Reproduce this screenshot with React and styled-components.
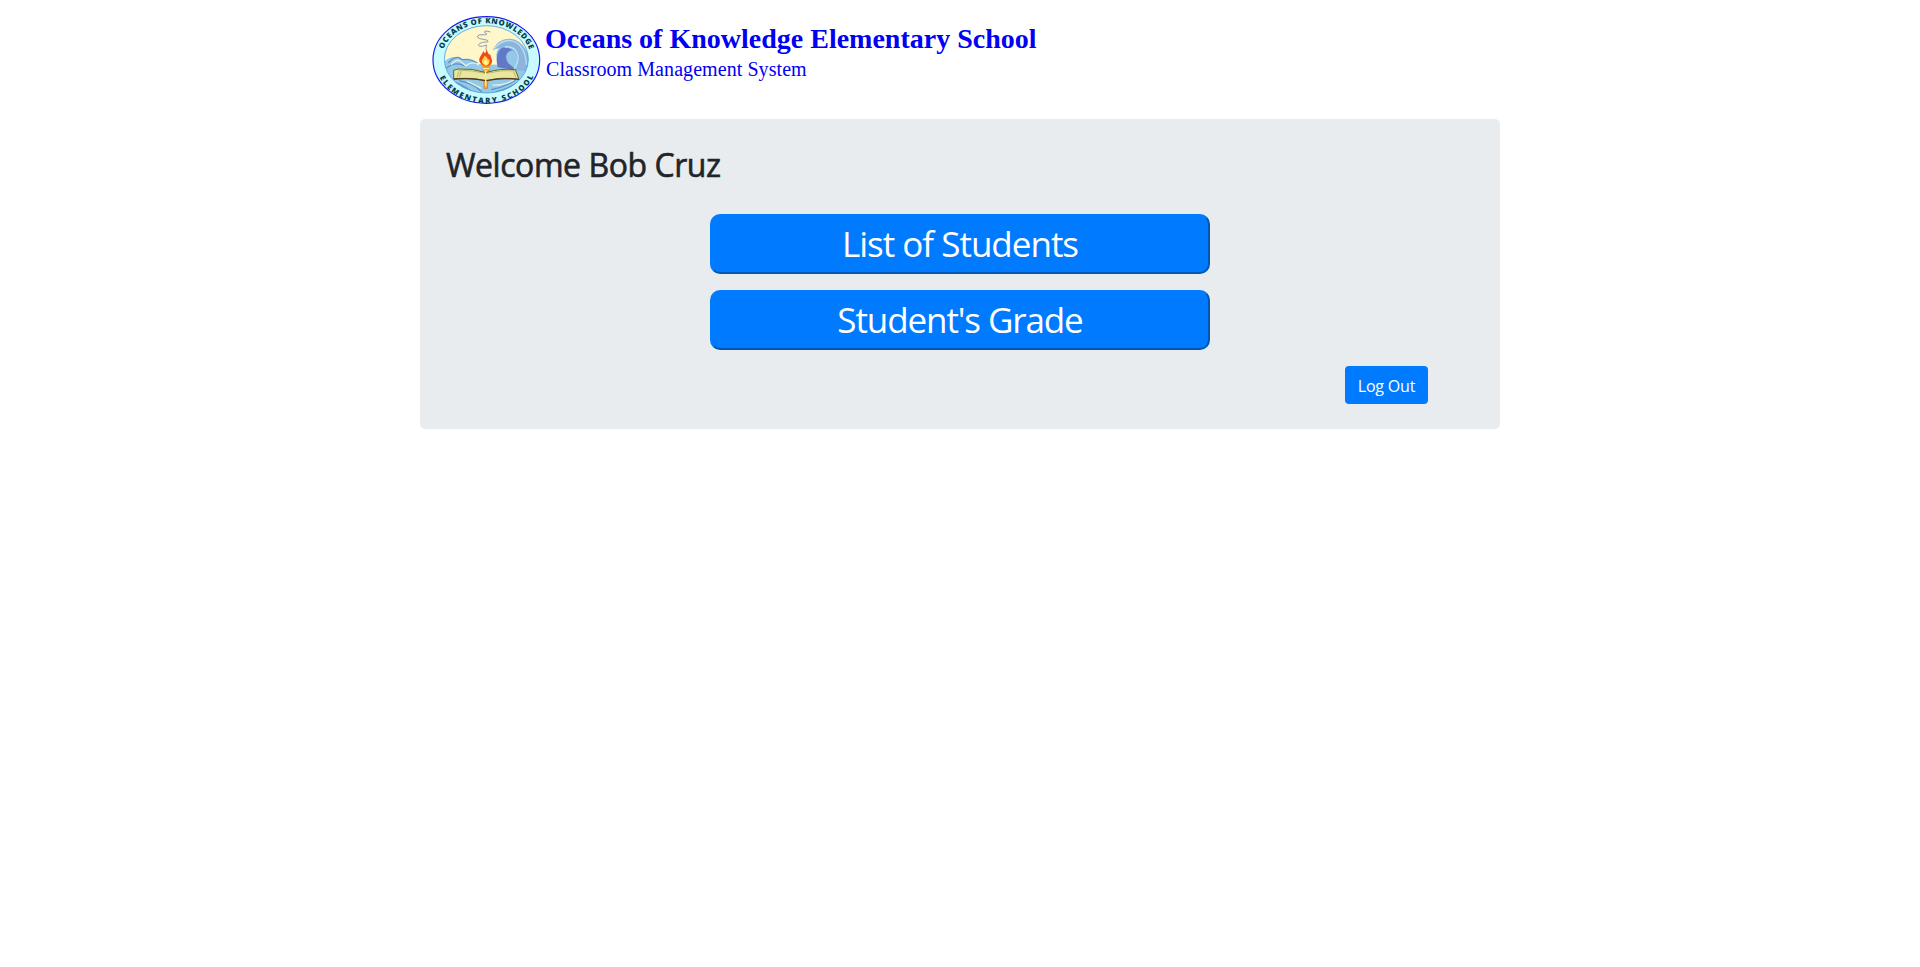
import React from 'react';
import styled, { createGlobalStyle } from 'styled-components';

const GlobalStyle = createGlobalStyle`
  *, *::before, *::after { box-sizing: border-box; }
  body {
    margin: 0;
    background: #fff;
    color: #212529;
    font-family: "Segoe UI", "Open Sans", "Noto Sans", sans-serif;
    font-size: 16px;
    line-height: 1.5;
  }
`;

const Page = styled.main`
  width: 1080px;
  margin: 0 auto;
`;

const Banner = styled.header`
  display: flex;
  align-items: flex-start;
  gap: 4px;
  height: 119px;
  padding: 15px 0 0 12px;
  color: #0000f5;
  font-family: "Times New Roman", "Liberation Serif", serif;
`;

const Seal = styled.svg`
  flex: none;
  display: block;
  width: 109px;
  height: 90px;
`;

const BannerText = styled.div`
  padding-top: 8px;
  white-space: nowrap;
`;

const SchoolName = styled.div`
  font-size: 28px;
  font-weight: 700;
  line-height: 32px;
`;

const SystemName = styled.div`
  padding: 1px 0 0 1px;
  font-size: 20px;
  line-height: 26px;
  letter-spacing: 0.07px;
`;

const Panel = styled.section`
  display: flex;
  flex-direction: column;
  height: 310px;
  padding: 25px;
  border-radius: 5px;
  background: #e9ecef;
`;

const Welcome = styled.h2`
  margin: 0;
  padding: 2px 0 30px 1px;
  font-size: 32px;
  font-weight: 500;
  line-height: 38px;
  letter-spacing: -0.45px;
  -webkit-text-stroke: 0.6px currentColor;
`;

const Menu = styled.nav`
  display: flex;
  flex-direction: column;
  align-items: center;
  gap: 16px;
`;

const MenuButton = styled.button`
  width: 500px;
  height: 60px;
  padding: 0;
  border: 2px solid;
  border-color: #007bff #0056b3 #0056b3 #007bff;
  border-radius: 10px;
  background: #007bff;
  color: #fff;
  font-family: inherit;
  font-size: 35px;
  line-height: 52px;
  letter-spacing: ${(p) => p.$tracking};
`;

const Footer = styled.div`
  display: flex;
  justify-content: flex-end;
  padding: 16px 47px 0 0;
`;

const LogOutButton = styled.button`
  width: 83px;
  height: 38px;
  padding: 1px 0 0;
  border: 0;
  border-radius: 4px;
  background: #007bff;
  color: #fff;
  font-family: inherit;
  font-size: 16px;
  line-height: 24px;
  letter-spacing: -0.2px;
`;

const RingText = styled.text`
  fill: #073f4b;
  font-family: "Open Sans", "Liberation Sans", sans-serif;
  font-size: 23px;
  font-weight: 800;
`;

function SchoolSeal() {
  return (
    <Seal viewBox="21 15 327 270" role="img" aria-label="School seal">
      <defs>
        <clipPath id="scene"><ellipse cx="184" cy="148" rx="126" ry="101" /></clipPath>
        <path id="upperArc" d="M51 135 A134 108 0 0 1 317 135" />
        <path id="lowerArc" d="M35 180 A152 124 0 0 0 333 180" />
      </defs>
      <ellipse cx="184" cy="150" rx="160" ry="130" fill="#c9faff" stroke="#1717ef" strokeWidth="3.5" />
      <g clipPath="url(#scene)">
        <rect x="50" y="40" width="270" height="220" fill="#fff6c9" />
        <path d="M55 158 Q75 136 98 142 Q112 150 122 147 Q140 148 158 162 L216 164 L214 133 Q216 111 239 105 Q266 103 282 122 L314 148 V255 H55Z" fill="#94c8e8" />
        <path d="M218 172 Q207 121 239 109 Q261 99 277 124 Q258 116 247 129 Q238 142 250 160 L276 181Z" fill="#6478c8" />
        <path d="M203 120 Q226 76 270 89 Q302 101 312 145 L306 184 L271 181 Q286 154 271 129 Q250 101 203 120Z" fill="#8db3df" />
        <path d="M208 115 Q239 81 271 96 Q301 112 304 164 M239 111 Q272 106 279 139 Q281 157 267 178" fill="none" stroke="#b7e2f0" strokeWidth="4" />
        <path d="M70 159 Q88 139 103 143 Q111 151 120 148 Q140 147 157 160 M59 178 Q92 151 119 168 M69 211 Q104 217 138 244 M102 212 Q146 220 170 245 M199 239 Q237 232 272 210 M212 246 Q264 232 287 210" fill="none" stroke="#5e91c7" strokeWidth="4" />
        <path d="M79 164 Q92 146 106 153 L122 167 Q144 151 162 166 M72 219 L119 246 M125 213 L169 235 M203 225 Q240 227 267 209" fill="none" stroke="#e3f4de" strokeWidth="4" />
      </g>
      <ellipse cx="184" cy="148" rx="126" ry="101" fill="none" stroke="#4aa1db" strokeWidth="2.5" />
      <path d="M184 121 C180 111 187 112 184 105 C170 112 152 109 164 101 C178 92 196 100 187 91 C174 86 155 88 158 78 C168 69 189 80 184 70 C172 66 179 60 196 66" fill="none" stroke="#7187a8" strokeWidth="2.5" />
      <path d="M174 177 L178 235 H187 L192 177Z" fill="#f8b43c" stroke="#c66c1c" strokeWidth="2" />
      <path d="M86 181 L99 177 Q142 174 183 188 Q226 174 271 179 L282 208 Q227 200 187 212 H178 Q137 201 86 207Z" fill="#e8e7a1" stroke="#656528" strokeWidth="3" />
      <path d="M86 207 Q140 203 178 211 H188 Q230 203 282 208" fill="none" stroke="#4f391c" strokeWidth="4" />
      <path d="M99 180 Q144 181 181 190 M184 190 Q229 179 269 182 M102 184 L96 202 M109 183 L103 203 M265 184 L273 203" fill="none" stroke="#a2a050" strokeWidth="2" />
      <path d="M166 154 H201 L191 181 H176Z" fill="#ff9b17" />
      <path d="M169 163 C155 148 168 139 175 123 C178 131 184 132 183 119 C191 126 190 137 196 133 C196 143 209 155 194 166 Q184 174 169 163Z" fill="#f04a20" />
      <path d="M174 162 C164 148 179 145 178 137 C190 142 187 150 192 148 C197 158 190 166 183 168Z" fill="#ffd537" />
      <path d="M178 162 Q173 153 184 149 Q192 160 183 166Z" fill="#fff7ad" />
      <path d="M174 176 H192 M182 180 V229" fill="none" stroke="#ffe995" strokeWidth="4" />
      <RingText><textPath href="#upperArc" startOffset="18" textLength="320" lengthAdjust="spacing">OCEANS OF KNOWLEDGE</textPath></RingText>
      <RingText><textPath href="#lowerArc" startOffset="24" textLength="340" lengthAdjust="spacing">ELEMENTARY SCHOOL</textPath></RingText>
    </Seal>
  );
}

export default function App() {
  return (
    <>
      <GlobalStyle />
      <Page>
        <Banner>
          <SchoolSeal />
          <BannerText>
            <SchoolName>Oceans of Knowledge Elementary School</SchoolName>
            <SystemName>Classroom Management System</SystemName>
          </BannerText>
        </Banner>
        <Panel>
          <Welcome>Welcome Bob Cruz</Welcome>
          <Menu>
            <MenuButton $tracking="-1px">List of Students</MenuButton>
            <MenuButton $tracking="-1.1px">Student's Grade</MenuButton>
          </Menu>
          <Footer><LogOutButton>Log Out</LogOutButton></Footer>
        </Panel>
      </Page>
    </>
  );
}
